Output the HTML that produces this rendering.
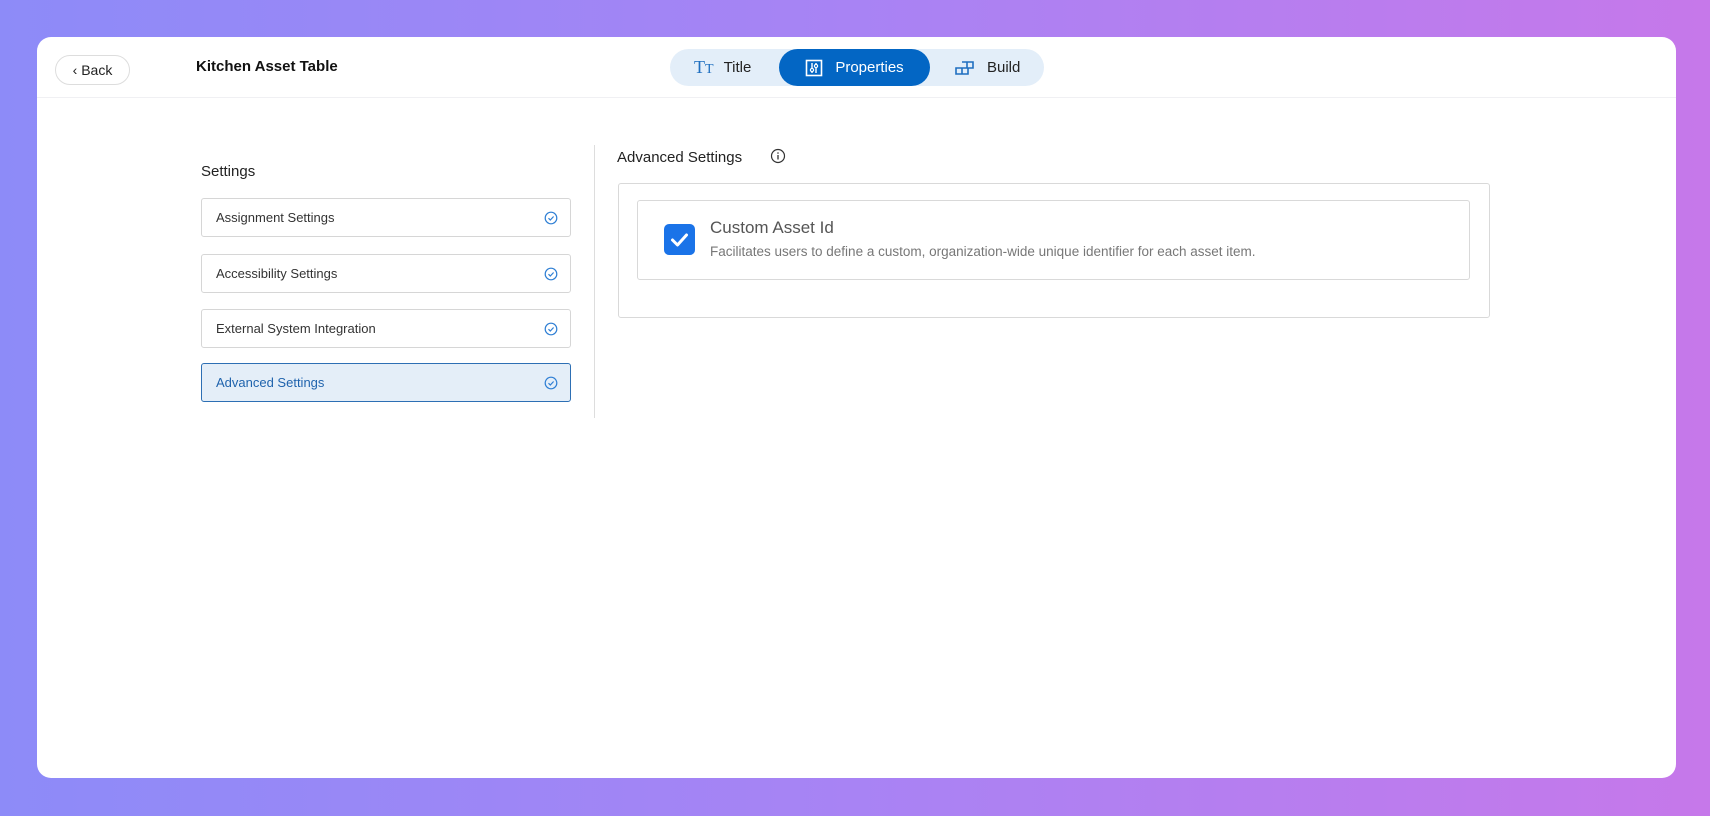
<!DOCTYPE html>
<html><head><meta charset="utf-8"><style>
*{box-sizing:border-box;margin:0;padding:0}
body{width:1710px;height:816px;overflow:hidden;font-family:"Liberation Sans",sans-serif;background:linear-gradient(90deg,#8d8bf8 0%,#a883f4 50%,#c678ea 100%);position:relative}
.card{position:absolute;left:37px;top:37px;width:1639px;height:741px;background:#fff;border-radius:14px}
.hdr{position:absolute;left:0;top:0;width:100%;height:61px;border-bottom:1px solid #f0f0f3}
.back{position:absolute;left:18px;top:18px;width:75px;height:30px;border:1px solid #ddd;border-radius:15px;font-size:14px;color:#222;display:flex;align-items:center;justify-content:center;padding-bottom:1px}
.ttl{position:absolute;left:159px;top:21px;font-size:15px;font-weight:bold;color:#111}
.tabs{position:absolute;left:633px;top:12px;width:374px;height:37px;background:#e3eef9;border-radius:19px}
.tab{position:absolute;top:0;height:37px;display:flex;align-items:center;font-size:15px;color:#222}
.tab.on{background:#0366c4;color:#fff;border-radius:19px;left:109px;width:151px;justify-content:center}
.side{position:absolute;left:164px;top:126px;font-size:15px;color:#222}
.item{position:absolute;left:164px;width:370px;height:39px;border:1px solid #d6d6d6;border-radius:3px;font-size:13px;color:#333;display:flex;align-items:center;padding-left:14px}
.item.on{background:#e4eef8;border-color:#2d6fb4;color:#1f63ad}
.item svg{position:absolute;right:12px;top:12px}
.div{position:absolute;left:557px;top:108px;width:1px;height:273px;background:#ddd}
.at{position:absolute;left:580px;top:111px;font-size:15px;color:#222}
.outer{position:absolute;left:581px;top:146px;width:872px;height:135px;border:1px solid #d9d9d9;border-radius:3px}
.inner{position:absolute;left:600px;top:163px;width:833px;height:80px;border:1px solid #d9d9d9;border-radius:3px}
.cb{position:absolute;left:627px;top:187px;width:31px;height:31px;background:#1a73e8;border-radius:5px}
.h{position:absolute;left:673px;top:181px;font-size:17px;color:#555}
.d{position:absolute;left:673px;top:207px;font-size:13.5px;color:#777}
</style></head><body>
<div class="card">
<div class="hdr">
<div class="back">‹&nbsp;Back</div>
<div class="ttl">Kitchen Asset Table</div>
<div class="tabs">
<div class="tab" style="left:24px"><span style="font-family:'Liberation Serif',serif;color:#1f6fc0;font-size:18px;margin-right:10px">T<span style="font-size:14px">T</span></span>Title</div>
<div class="tab on"><svg width="18" height="18" viewBox="0 0 18 18" style="margin-right:12px"><rect x="1.5" y="1.5" width="15" height="15" fill="none" stroke="#fff" stroke-width="1.6"/><path d="M7 4v10M11 4v10" stroke="#fff" stroke-width="1.4"/><circle cx="7" cy="11" r="1.6" fill="#0366c4" stroke="#fff" stroke-width="1.2"/><circle cx="11" cy="7" r="1.6" fill="#0366c4" stroke="#fff" stroke-width="1.2"/></svg>Properties</div>
<div class="tab" style="left:285px"><svg width="20" height="16" viewBox="0 0 20 16" style="margin-right:12px"><path d="M1 8h12v6H1zM7 8v6M7 2h11v6H13M12 2v6" fill="none" stroke="#1f6fc0" stroke-width="1.6"/></svg>Build</div>
</div>
</div>
<div class="side">Settings</div>
<div class="item" style="top:161px">Assignment Settings<svg width="14" height="14" viewBox="0 0 14 14"><circle cx="7" cy="7" r="5.8" fill="none" stroke="#2f7fd4" stroke-width="1.2"/><path d="M4.5 7.2l1.8 1.8 3.3-3.5" fill="none" stroke="#2f7fd4" stroke-width="1.2"/></svg></div>
<div class="item" style="top:217px">Accessibility Settings<svg width="14" height="14" viewBox="0 0 14 14"><circle cx="7" cy="7" r="5.8" fill="none" stroke="#2f7fd4" stroke-width="1.2"/><path d="M4.5 7.2l1.8 1.8 3.3-3.5" fill="none" stroke="#2f7fd4" stroke-width="1.2"/></svg></div>
<div class="item" style="top:272px">External System Integration<svg width="14" height="14" viewBox="0 0 14 14"><circle cx="7" cy="7" r="5.8" fill="none" stroke="#2f7fd4" stroke-width="1.2"/><path d="M4.5 7.2l1.8 1.8 3.3-3.5" fill="none" stroke="#2f7fd4" stroke-width="1.2"/></svg></div>
<div class="item on" style="top:326px">Advanced Settings<svg width="14" height="14" viewBox="0 0 14 14"><circle cx="7" cy="7" r="5.8" fill="none" stroke="#2f7fd4" stroke-width="1.2"/><path d="M4.5 7.2l1.8 1.8 3.3-3.5" fill="none" stroke="#2f7fd4" stroke-width="1.2"/></svg></div>
<div class="div"></div>
<div class="at">Advanced Settings <svg width="16" height="16" viewBox="0 0 16 16" style="vertical-align:-2px;margin-left:24px"><circle cx="8" cy="8" r="6.5" fill="none" stroke="#333" stroke-width="1.2"/><path d="M8 7v4.5" stroke="#333" stroke-width="1.3"/><circle cx="8" cy="5" r=".8" fill="#333"/></svg></div>
<div class="outer"></div>
<div class="inner"></div>
<div class="cb"><svg width="31" height="31" viewBox="0 0 31 31"><path d="M8.5 16l5 5 9-10" fill="none" stroke="#fff" stroke-width="3" stroke-linecap="round" stroke-linejoin="round"/></svg></div>
<div class="h">Custom Asset Id</div>
<div class="d">Facilitates users to define a custom, organization-wide unique identifier for each asset item.</div>
</div>
</body></html>
